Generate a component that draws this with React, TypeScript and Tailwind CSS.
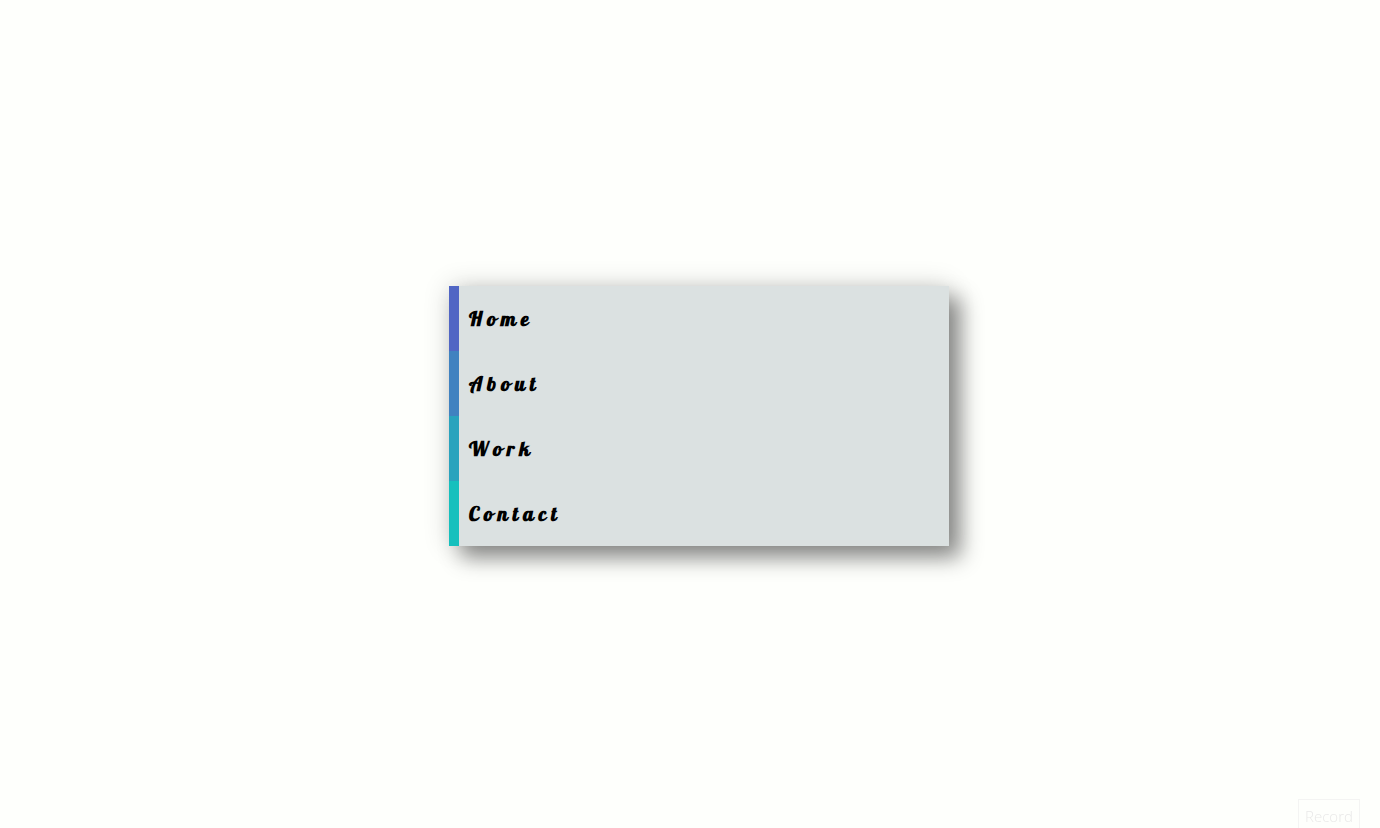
const items = [
  { label: "Home", href: "#home", bar: "border-[#5166c4]" },
  { label: "About", href: "#about", bar: "border-[#4082c0]" },
  { label: "Work", href: "#work", bar: "border-[#29a3bd]" },
  { label: "Contact", href: "#contact", bar: "border-[#16c0bd]" },
];

export default function App() {
  return (
    <main className="flex min-h-screen items-center justify-center bg-[#fefffc] pt-1 pl-[18px]">
      <nav className="w-full max-w-[500px] bg-[#dbe1e1] shadow-[12px_12px_20px_rgba(0,0,0,0.42),0_0_25px_rgba(0,0,0,0.16)]">
        <ul>
          {items.map((item) => (
            <li key={item.label}>
              <a
                href={item.href}
                className={`flex h-[65px] items-center border-l-10 pl-[10px] font-['Lobster','Liberation_Serif',serif] text-[20px] font-bold tracking-[5px] text-black ${item.bar}`}
              >
                {item.label}
              </a>
            </li>
          ))}
        </ul>
      </nav>
      <button
        type="button"
        className="fixed right-5 -bottom-2 h-[37px] w-[62px] border border-[#f4f4f3] pb-[2px] font-['Open_Sans',sans-serif] text-[15px] font-light text-[#e9e9e8]"
      >
        Record
      </button>
    </main>
  );
}
